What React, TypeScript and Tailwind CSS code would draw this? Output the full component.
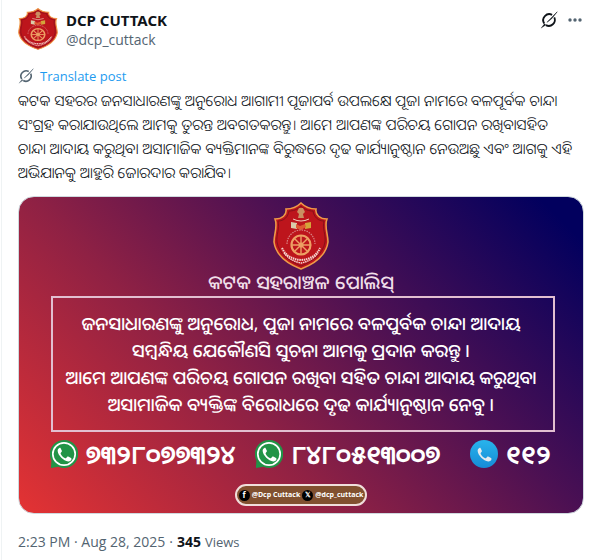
import { ReactNode } from 'react';

const postLines = [
  'କଟକ ସହରର ଜନସାଧାରଣଙ୍କୁ ଅନୁରୋଧ ଆଗାମୀ ପୂଜାପର୍ବ ଉପଲକ୍ଷେ ପୂଜା ନାମରେ ବଳପୂର୍ବକ ଚାନ୍ଦା',
  'ସଂଗ୍ରହ କରାଯାଉଥିଲେ ଆମକୁ ତୁରନ୍ତ ଅବଗତକରନ୍ତୁ। ଆମେ ଆପଣଙ୍କ ପରିଚୟ ଗୋପନ ରଖିବାସହିତ',
  'ଚାନ୍ଦା ଆଦାୟ କରୁଥିବା ଅସାମାଜିକ ବ୍ୟକ୍ତିମାନଙ୍କ ବିରୁଦ୍ଧରେ ଦୃଢ କାର୍ଯ୍ୟାନୁଷ୍ଠାନ ନେଉଅଛୁ ଏବଂ ଆଗକୁ ଏହି',
  'ଅଭିଯାନକୁ ଆହୁରି ଜୋରଦାର କରାଯିବ।',
];

const noticeLines = [
  'ଜନସାଧାରଣଙ୍କୁ ଅନୁରୋଧ, ପୁଜା ନାମରେ ବଳପୁର୍ବକ ଚାନ୍ଦା ଆଦାୟ',
  'ସମ୍ବନ୍ଧିୟ ଯେକୌଣସି ସୁଚନା ଆମକୁ ପ୍ରଦାନ କରନ୍ତୁ ।',
  'ଆମେ ଆପଣଙ୍କ ପରିଚୟ ଗୋପନ ରଖିବା ସହିତ ଚାନ୍ଦା ଆଦାୟ କରୁଥିବା',
  'ଅସାମାଜିକ ବ୍ୟକ୍ତିଙ୍କ ବିରୋଧରେ ଦୃଢ କାର୍ଯ୍ୟାନୁଷ୍ଠାନ ନେବୁ ।',
];

function Emblem({ className }: { className: string }) {
  const spokes = [0, 45, 90, 135];
  return (
    <svg viewBox="0 0 56 68" preserveAspectRatio="none" className={className} aria-hidden="true">
      <path
        d="M28 1 C24 5 19 7 13 7 C14 13 9 17 2 17 C5 24 1 32 1 40 C3 54 15 62 28 67 C41 62 53 54 55 40 C55 32 51 24 54 17 C47 17 42 13 43 7 C37 7 32 5 28 1Z"
        fill="#bd151c"
        stroke="#ee9a48"
        strokeWidth="1.6"
      />
      <path
        d="M28 4 C24 8 20 9 16 9 C15 15 11 19 5 19 C7 26 3 33 4 40 C6 52 16 59 28 64 C40 59 50 52 52 40 C53 33 49 26 51 19 C45 19 41 15 40 9 C36 9 32 8 28 4Z"
        fill="none"
        stroke="#86101a"
        strokeWidth="1"
      />
      <path d="M26 6h4l2 4-2 2 1 4h-6l1-4-2-2z" fill="#c98f62" />
      <path d="M20 17q8 4 16 0" fill="none" stroke="#f0cdbb" strokeWidth="1" />
      <path d="M18 20l6 1v6l-6-1z" fill="#d9ccaa" />
      <path d="M32 21l6-1v6l-6 1z" fill="#d3a53a" />
      <path d="M23 22l4 2 5-2 1 3-5 3-5-2z" fill="#e05a34" />
      <path d="M14 42a14 14 0 0 1 28 0" fill="none" stroke="#d98484" strokeWidth="1.2" strokeDasharray="1.5 1" />
      <circle cx="28" cy="43" r="9.5" fill="none" stroke="#eda064" strokeWidth="2.2" />
      <circle cx="28" cy="43" r="2.5" fill="#eda064" />
      {spokes.map(angle => (
        <path key={angle} d="M28 34v18" stroke="#eda064" strokeWidth="1.4" transform={`rotate(${angle} 28 43)`} />
      ))}
      <path d="M9 46q5 11 19 12 14-1 19-12" fill="none" stroke="#f4d5d0" strokeWidth="2" strokeDasharray="1.5 .7" />
      <path d="M11 51q6 8 17 10 11-2 17-10" fill="none" stroke="#f4d5d0" strokeWidth="1.4" strokeDasharray="1.5 .7" />
    </svg>
  );
}

function GrokIcon({ className }: { className: string }) {
  return (
    <svg viewBox="0 0 18 18" className={className} fill="none" stroke="currentColor" aria-hidden="true">
      <path d="M12.1 3.9A6 6 0 0 0 4.2 12.4" strokeWidth="1.8" />
      <path d="M5.9 14.1A6 6 0 0 0 14.3 6.4" strokeWidth="1.8" />
      <path d="M7 11.3L17.2.8l-5.6 7z" fill="currentColor" strokeWidth=".5" />
      <path d="M1 17.2L4.6 12.6l1.3 1.3z" fill="currentColor" strokeWidth=".2" />
    </svg>
  );
}

const handset =
  'M10 8.5c-.8.3-2 1.6-1.8 3.3.4 4.7 6.2 10.6 11.3 11.3 1.8.1 3.2-1 3.5-2.4.1-.6-.1-1-.5-1.3l-3-1.6c-.5-.2-.9-.1-1.2.3l-1 1.2c-.3.3-.6.4-1 .2-2.2-1-3.9-2.7-4.9-4.8-.1-.4 0-.7.2-1l.9-1c.3-.4.3-.8.2-1.2l-1.3-2.7c-.3-.5-.8-.6-1.4-.3z';

function WhatsAppIcon() {
  return (
    <svg viewBox="0 0 30 30" className="size-7 shrink-0" aria-hidden="true">
      <path d="M15 0a15 15 0 1 1-6 28.6L1 30l.5-8A15 15 0 0 1 15 0z" fill="#219447" />
      <circle cx="15" cy="15" r="12" fill="none" stroke="#fff" strokeWidth="1.8" />
      <path d={handset} fill="#fff" />
    </svg>
  );
}

function PhoneIcon() {
  return (
    <svg viewBox="0 0 30 30" className="size-7 shrink-0" aria-hidden="true">
      <defs>
        <linearGradient id="phone" x2="0" y2="1">
          <stop stopColor="#28b4ec" />
          <stop offset="1" stopColor="#168bd6" />
        </linearGradient>
      </defs>
      <circle cx="15" cy="15" r="15" fill="url(#phone)" />
      <path d={handset} fill="#e5eaef" />
    </svg>
  );
}

function PhoneNumber({ icon, children }: { icon: ReactNode; children: ReactNode }) {
  return (
    <span className="flex items-center gap-2">
      {icon}
      <span className="text-[26px] leading-7 font-semibold whitespace-nowrap">{children}</span>
    </span>
  );
}

function NoticeImage() {
  return (
    <div className="mt-3 flex h-[318px] flex-col items-center overflow-hidden rounded-2xl border border-[#cfd9de] bg-[linear-gradient(45deg,#e43333_0%,#8f2144_37%,#4b1053_64%,#02005e_95%)] text-white">
      <Emblem className="mt-[5px] h-[68px] w-14 shrink-0" />
      <h2 className="text-[19px] leading-6 font-medium text-[#f0dfe9]">କଟକ ସହରାଞ୍ଚଳ ପୋଲିସ୍</h2>
      <div className="mt-[2px] ml-1 flex h-[136px] w-[calc(100%-60px)] shrink-0 flex-col items-center justify-center border-2 border-[#e2bfd0] pr-1 text-[18px] leading-[27px] font-medium whitespace-nowrap">
        {noticeLines.map(line => (
          <p key={line}>{line}</p>
        ))}
      </div>
      <div className="mt-2 grid h-7 w-[calc(100%-62px)] shrink-0 grid-cols-[205fr_214fr_82fr] items-center">
        <PhoneNumber icon={<WhatsAppIcon />}>୭୩୨୮୦୭୭୩୨୪</PhoneNumber>
        <PhoneNumber icon={<WhatsAppIcon />}>୮୪୮୦୫୧୩୦୦୭</PhoneNumber>
        <PhoneNumber icon={<PhoneIcon />}>୧୧୨</PhoneNumber>
      </div>
      <div className="mt-4 flex h-[22px] shrink-0 items-center gap-[2px] rounded-full border-2 border-[#f0dedb] bg-[#81502f] px-[2px] font-['Open_Sans',sans-serif] text-[7px] leading-3 font-bold">
        <span className="flex size-[11px] items-center justify-center rounded-full bg-black text-[8px]">f</span>
        <span>@Dcp Cuttack</span>
        <span className="flex size-[11px] items-center justify-center rounded-full bg-black">𝕏</span>
        <span>@dcp_cuttack</span>
      </div>
    </div>
  );
}

export default function App() {
  return (
    <main className="min-h-[560px] bg-white font-['Open_Sans','Noto_Sans_Oriya',sans-serif] text-[#0f1419]">
      <article className="ml-px min-h-[560px] border-l border-[#eff3f4] pt-2 pr-4 pl-4">
        <header className="flex h-[42px] items-start">
          <Emblem className="h-[42px] w-10 shrink-0" />
          <div className="ml-2 text-[15px] leading-5">
            <h1 className="mt-[2px] font-['Noto_Sans',sans-serif] font-bold">DCP CUTTACK</h1>
            <a href="#profile" className="block text-sm leading-5 text-[#536471]">@dcp_cuttack</a>
          </div>
          <div className="ml-auto flex items-center gap-2 pt-[3px]">
            <button type="button" aria-label="Explain this post">
              <GrokIcon className="size-[18px]" />
            </button>
            <button type="button" aria-label="More" className="text-[#536471]">
              <svg viewBox="0 0 18 18" className="size-[18px]" fill="currentColor" aria-hidden="true">
                <circle cx="4" cy="9" r="1.7" />
                <circle cx="9" cy="9" r="1.7" />
                <circle cx="14" cy="9" r="1.7" />
              </svg>
            </button>
          </div>
        </header>

        <button type="button" className="mt-[18px] flex items-center gap-[6px] text-[13px] leading-4 text-[#1d9bf0]">
          <GrokIcon className="size-4 text-[#536471]" />
          Translate post
        </button>

        <div className="mt-1 font-['Noto_Sans','Noto_Sans_Oriya',sans-serif] text-[15px] leading-6 font-light whitespace-nowrap">
          {postLines.map(line => (
            <p key={line}>{line}</p>
          ))}
        </div>

        <NoticeImage />

        <footer className="mt-[18px] flex items-center gap-1 text-sm leading-5 text-[#536471]">
          <a href="#status">
            <time dateTime="2025-08-28T14:23">2:23 PM · Aug 28, 2025</time>
          </a>
          <span>·</span>
          <span className="font-bold text-[#0f1419]">345</span>
          <span className="text-[13px]">Views</span>
        </footer>
      </article>
    </main>
  );
}
